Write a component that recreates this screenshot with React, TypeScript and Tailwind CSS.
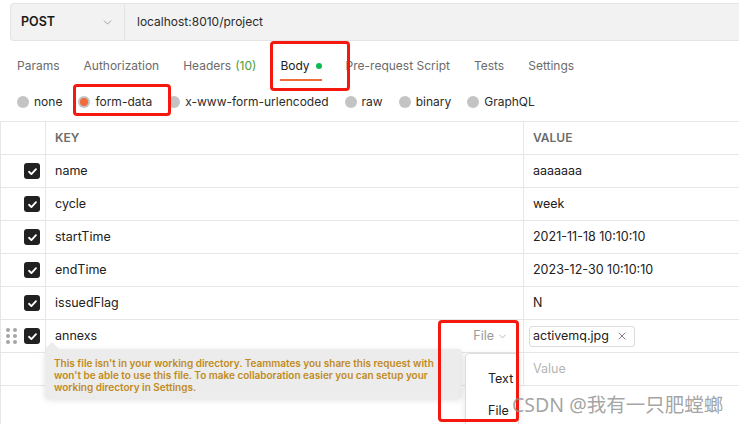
import { ChevronDown, X } from 'lucide-react';

const tabs = [
  { label: 'Params' },
  { label: 'Authorization' },
  { label: 'Headers', count: '(10)' },
  { label: 'Body', active: true },
  { label: 'Pre-request Script' },
  { label: 'Tests' },
  { label: 'Settings' },
];

const bodyTypes = ['none', 'form-data', 'x-www-form-urlencoded', 'raw', 'binary', 'GraphQL'];

const rows = [
  { key: 'name', value: 'aaaaaaa' },
  { key: 'cycle', value: 'week' },
  { key: 'startTime', value: '2021-11-18 10:10:10' },
  { key: 'endTime', value: '2023-12-30 10:10:10' },
  { key: 'issuedFlag', value: 'N' },
];

function Checkbox() {
  return (
    <div className="w-[16px] h-[16px] rounded-[3px] bg-[#212121] flex items-center justify-center">
      <svg width="11" height="11" viewBox="0 0 12 12" fill="none">
        <path d="M2.2 6.3 4.8 8.8 9.8 3.4" stroke="white" strokeWidth="2" strokeLinecap="round" strokeLinejoin="round" />
      </svg>
    </div>
  );
}

function DragHandle() {
  return (
    <div className="grid grid-cols-2 gap-x-[3px] gap-y-[2px]">
      {[0, 1, 2, 3, 4, 5].map((i) => (
        <span key={i} className="w-[4px] h-[4px] rounded-full bg-[#a6a6a6]" />
      ))}
    </div>
  );
}

export default function App() {
  return (
    <div
      className="relative w-[739px] h-[424px] overflow-hidden bg-white text-[#212121]"
      style={{ fontFamily: 'Inter, "Noto Sans", sans-serif' }}
    >
      {/* url bar */}
      <div className="ml-[10px] mt-[3px] h-[38px] flex bg-[#f2f2f2] border border-r-0 border-[#e4e4e4] rounded-l-[4px]">
        <div className="w-[114px] shrink-0 flex items-center justify-between pl-[10px] pr-[10px] border-r border-[#e4e4e4]">
          <span className="text-[12.5px] font-semibold text-[#1a1a1a]">POST</span>
          <ChevronDown size={13} strokeWidth={1.5} className="text-[#8a8a8a]" />
        </div>
        <div className="flex items-center pl-[12px] text-[12px] text-[#2b2b2b]">localhost:8010/project</div>
      </div>

      {/* tabs */}
      <div className="flex pl-[17px] gap-[24px] h-[41px]">
        {tabs.map((t) => (
          <div key={t.label} className="flex flex-col pt-[17px]">
            <div className={`flex items-center h-[16px] text-[12px] ${t.active ? 'text-[#212121]' : 'text-[#6b6b6b]'}`}>
              <span>{t.label}</span>
              {t.count && <span className="ml-[4px] text-[#4d9c3a]">{t.count}</span>}
              {t.active && <span className="ml-[6px] w-[6px] h-[6px] rounded-full bg-[#0cbb52]" />}
            </div>
            <div className={`mt-[5px] h-[2px] ${t.active ? 'bg-[#f26b3a]' : ''}`} />
          </div>
        ))}
      </div>

      {/* body types */}
      <div className="flex items-center h-[39px] pl-[17px] text-[12px] text-[#2b2b2b]">
        {bodyTypes.map((b) => (
          <div key={b} className="flex items-center gap-[5px] mr-[16px]">
            <span className="w-[12px] h-[12px] rounded-full bg-[#c4c4c4] flex items-center justify-center">
              {b === 'form-data' && <span className="w-[8px] h-[8px] rounded-full bg-[#f26b3a]" />}
            </span>
            <span>{b}</span>
          </div>
        ))}
      </div>

      {/* table */}
      <div className="border-t border-l border-[#e6e6e6] text-[12.5px]">
        <div className="grid grid-cols-[45px_478px_1fr] h-[33px] border-b border-[#e6e6e6]">
          <div className="border-r border-[#e6e6e6]" />
          <div className="flex items-center pl-[9px] text-[12px] font-semibold text-[#6b6b6b] border-r border-[#e6e6e6]">KEY</div>
          <div className="flex items-center pl-[9px] text-[12px] font-semibold text-[#6b6b6b]">VALUE</div>
        </div>
        {rows.map((r) => (
          <div key={r.key} className="grid grid-cols-[45px_478px_1fr] h-[33px] border-b border-[#e6e6e6]">
            <div className="flex items-center justify-end pr-[5px] border-r border-[#e6e6e6]">
              <Checkbox />
            </div>
            <div className="flex items-center pl-[9px] pt-[1px] border-r border-[#e6e6e6]">{r.key}</div>
            <div className="flex items-center pl-[9px] pt-[1px]">{r.value}</div>
          </div>
        ))}
        <div className="grid grid-cols-[45px_478px_1fr] h-[33px] border-b border-[#e6e6e6]">
          <div className="flex items-center justify-between pl-[5px] pr-[5px] border-r border-[#e6e6e6]">
            <DragHandle />
            <Checkbox />
          </div>
          <div className="flex items-center justify-between pl-[9px] pr-[15px] pt-[1px] border-r border-[#e6e6e6]">
            <span>annexs</span>
            <span className="flex items-center gap-[3px] text-[#9a9a9a]">
              File
              <ChevronDown size={11} strokeWidth={1.5} />
            </span>
          </div>
          <div className="flex items-center pl-[5px]">
            <span className="flex items-center h-[21px] pl-[3px] pr-[6px] gap-[7px] border border-[#dcdcdc] rounded-[3px]">
              activemq.jpg
              <X size={12} strokeWidth={1.5} className="text-[#555]" />
            </span>
          </div>
        </div>
        <div className="grid grid-cols-[45px_478px_1fr] h-[33px] border-b border-[#e6e6e6]">
          <div className="border-r border-[#e6e6e6]" />
          <div className="border-r border-[#e6e6e6]" />
          <div className="flex items-center pl-[9px] text-[#b5b5b5]">Value</div>
        </div>
        <div className="h-[60px]" />
      </div>

      {/* warning tooltip */}
      <div className="absolute left-[45px] top-[349px] w-[417px] h-[49px] rounded-[4px] bg-[#ececec] shadow-[0_2px_6px_rgba(0,0,0,0.12)] pl-[9px] pt-[8px] text-[10px] leading-[12px] font-semibold text-[#c08b1c] whitespace-nowrap">
        <span className="absolute -top-[5px] left-[2px] w-[10px] h-[10px] rotate-45 bg-[#ececec]" />
        <div className="relative">
          This file isn't in your working directory. Teammates you share this request with
          <br />
          won't be able to use this file. To make collaboration easier you can setup your
          <br />
          working directory in Settings.
        </div>
      </div>

      {/* type menu */}
      <div className="absolute left-[465px] top-[353px] w-[54px] h-[90px] bg-white border border-[#dedede] rounded-[4px] shadow-[0_2px_6px_rgba(0,0,0,0.1)] text-[12.5px]">
        <div className="pl-[22px] mt-[17px] h-[16px] leading-[16px]">Text</div>
        <div className="pl-[22px] mt-[16px] h-[16px] leading-[16px]">File</div>
      </div>

      {/* annotation boxes */}
      <div className="absolute left-[270px] top-[41px] w-[80px] h-[50px] border-[3px] border-[#f5180f] rounded-[4px]" />
      <div className="absolute left-[73px] top-[84px] w-[98px] h-[32px] border-[3px] border-[#f5180f] rounded-[4px]" />
      <div className="absolute left-[438px] top-[320px] w-[81px] h-[102px] border-[3px] border-[#f5180f] rounded-[4px]" />

      {/* watermark */}
      <div
        className="absolute left-[512px] top-[391px] text-[19.5px] leading-[28px] text-[#8c8c8c]/80 whitespace-nowrap"
        style={{ fontFamily: '"Noto Sans", "Noto Sans CJK SC", sans-serif' }}
      >
        CSDN @我有一只肥螳螂
      </div>
    </div>
  );
}
